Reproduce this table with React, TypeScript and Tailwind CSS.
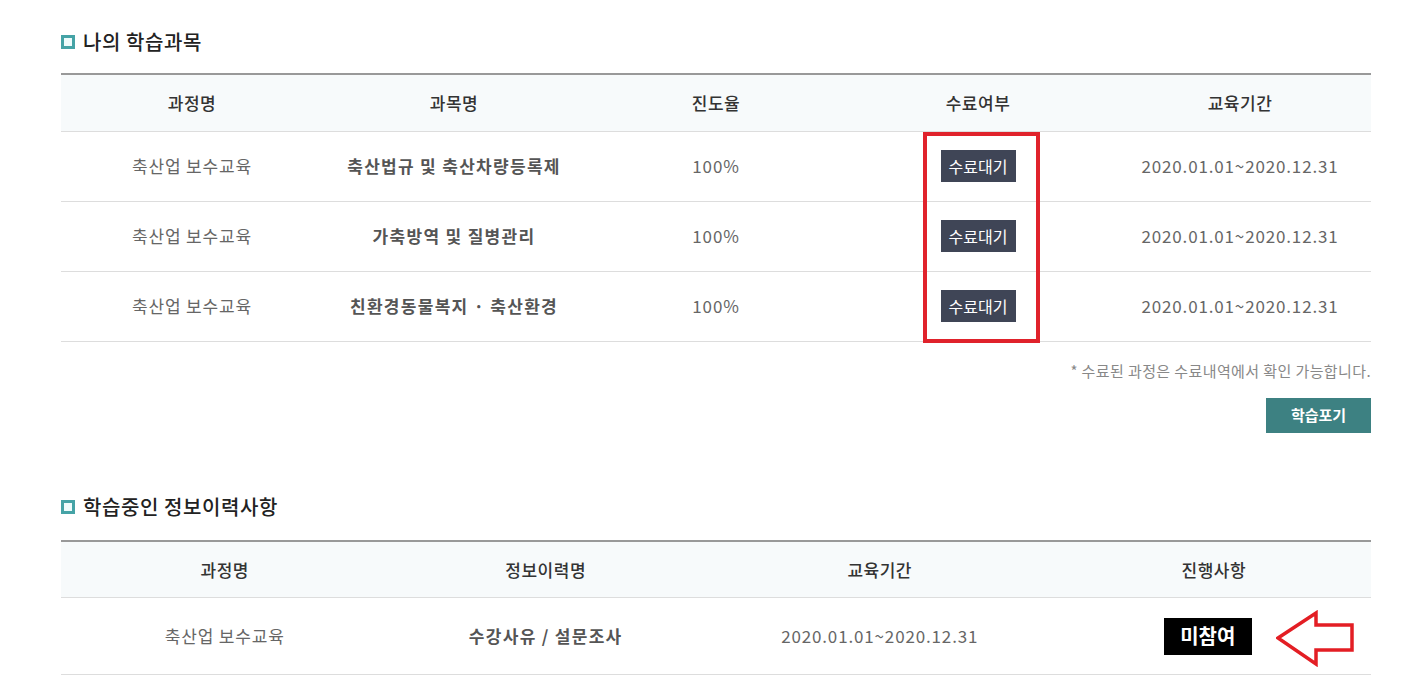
import React from "react";

const font = { fontFamily: '"Noto Sans CJK KR", "Noto Sans", sans-serif' };

function Bullet() {
  return (
    <span className="inline-flex h-[14px] w-[14px] items-center justify-center bg-[#45a3a6]">
      <span className="h-[8px] w-[8px] bg-[#eefbfb]" />
    </span>
  );
}

function Heading({ children }: { children: React.ReactNode }) {
  return (
    <div className="flex items-center gap-[8px] h-[24px]">
      <Bullet />
      <span className="text-[20px] leading-[24px] tracking-[0.6px] text-[#222] font-medium">{children}</span>
    </div>
  );
}

const subjects = [
  "축산법규 및 축산차량등록제",
  "가축방역 및 질병관리",
  "친환경동물복지 · 축산환경",
];

const cell = "text-center text-[17px] tracking-[0.85px] text-[#666]";
const boldCell = "text-center text-[17px] tracking-[1.3px] font-bold text-[#555]";
const headCell = "text-[17px] tracking-[0.5px] font-medium text-[#333]";

export default function App() {
  return (
    <div className="min-h-[699px] bg-white" style={font}>
      <div className="ml-[61px] w-[1310px] pt-[30px]">
        <Heading>나의 학습과목</Heading>

        <div className="relative mt-[19px]">
          <table className="w-full table-fixed border-collapse border-t-2 border-[#999]">
            <thead>
              <tr className="h-[57px] bg-[#f7fafb] border-b border-[#ddd]">
                {["과정명", "과목명", "진도율", "수료여부", "교육기간"].map((h) => (
                  <th key={h} className={headCell}>{h}</th>
                ))}
              </tr>
            </thead>
            <tbody>
              {subjects.map((s) => (
                <tr key={s} className="h-[70px] border-b border-[#ddd]">
                  <td className={cell}>축산업 보수교육</td>
                  <td className={boldCell}>{s}</td>
                  <td className={cell}>100%</td>
                  <td className="text-center">
                    <span className="inline-flex h-[32px] w-[75px] items-center justify-center bg-[#3f4556] text-[16px] text-white">
                      수료대기
                    </span>
                  </td>
                  <td className={cell}>2020.01.01~2020.12.31</td>
                </tr>
              ))}
            </tbody>
          </table>
          <div className="pointer-events-none absolute left-[862px] top-[59px] h-[211px] w-[117px] border-4 border-[#e0222b]" />
        </div>

        <p className="mt-[19px] text-right text-[15px] leading-[20px] tracking-[0.4px] text-[#888]">
          * 수료된 과정은 수료내역에서 확인 가능합니다.
        </p>
        <div className="mt-[17px] flex justify-end">
          <button className="h-[35px] w-[105px] bg-[#3d8182] text-[15px] font-bold text-white">학습포기</button>
        </div>

        <div className="mt-[62px]">
          <Heading>학습중인 정보이력사항</Heading>
        </div>

        <table className="mt-[21px] w-full table-fixed border-collapse border-t-2 border-[#999]">
          <colgroup>
            <col className="w-[25%]" />
            <col className="w-[24%]" />
            <col className="w-[27%]" />
            <col className="w-[24%]" />
          </colgroup>
          <thead>
            <tr className="h-[57px] bg-[#f7fafb] border-b border-[#ddd]">
              {["과정명", "정보이력명", "교육기간", "진행사항"].map((h) => (
                <th key={h} className={headCell}>{h}</th>
              ))}
            </tr>
          </thead>
          <tbody>
            <tr className="h-[77px] border-b border-[#ddd]">
              <td className={cell}>축산업 보수교육</td>
              <td className={boldCell}>수강사유 / 설문조사</td>
              <td className={cell}>2020.01.01~2020.12.31</td>
              <td className="relative text-center">
                <span className="mr-[12px] inline-flex h-[37px] w-[88px] items-center justify-center bg-black text-[20px] font-bold text-white">
                  미참여
                </span>
                <svg
                  className="absolute left-[219px] top-[12px]"
                  width="80"
                  height="57"
                  viewBox="0 0 80 57"
                >
                  <polygon
                    points="2,28 40,3 40,15 76,15 76,40 40,40 40,54"
                    fill="none"
                    stroke="#e31e24"
                    strokeWidth="3.5"
                    strokeLinejoin="miter"
                  />
                </svg>
              </td>
            </tr>
          </tbody>
        </table>
      </div>
    </div>
  );
}
